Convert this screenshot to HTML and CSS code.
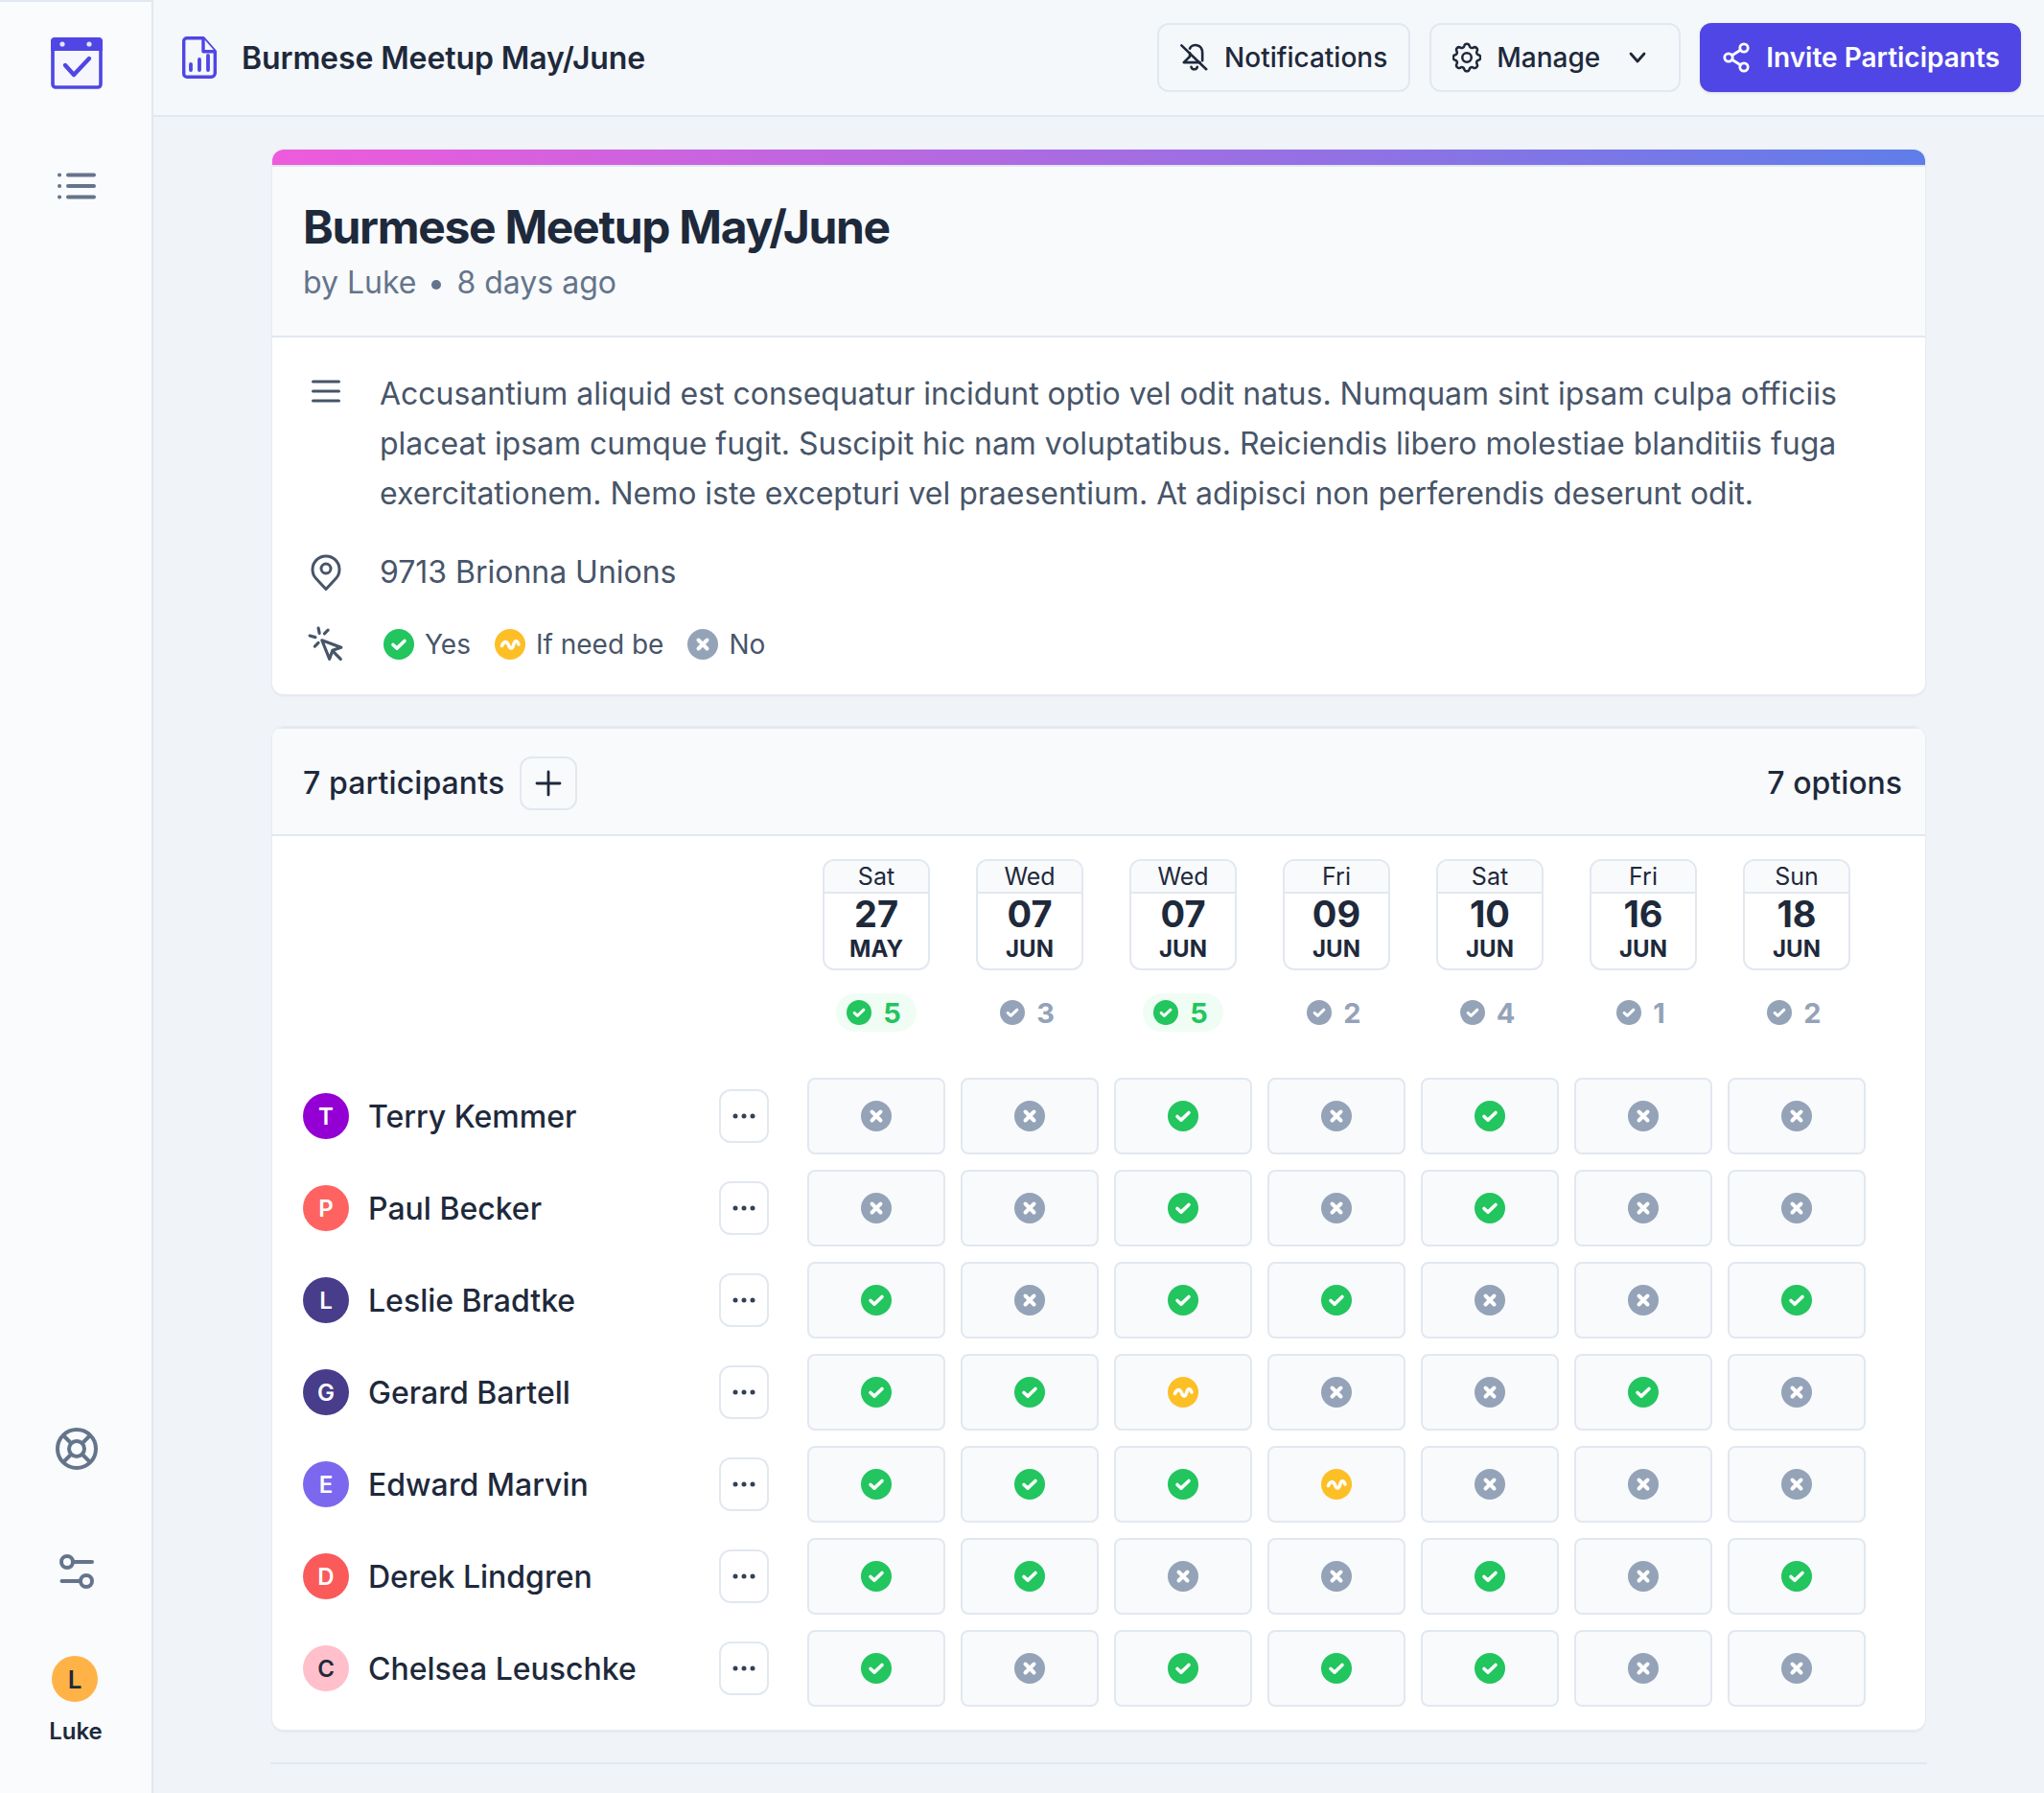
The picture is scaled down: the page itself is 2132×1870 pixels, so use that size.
FILE: index.html
```html
<!DOCTYPE html>
<html lang="en">
<head>
    <meta charset="UTF-8">
    <title>Burmese Meetup May/June</title>
    <link rel="stylesheet" href="styles.css">
</head>
<body>
    <!-- Shared icons -->
    <svg class="icon-defs" aria-hidden="true">
        <symbol id="yes" viewBox="0 0 32 32">
            <circle cx="16" cy="16" r="16" fill="#22c55e"/>
            <path d="M10 16.500l4 3.600 8-7.600" fill="none" stroke="#fff" stroke-width="3.600" stroke-linecap="round" stroke-linejoin="round"/>
        </symbol>
        <symbol id="maybe" viewBox="0 0 32 32">
            <circle cx="16" cy="16" r="16" fill="#fdbf26"/>
            <path d="M7.500 17.500C8.500 14.500 11 12.500 13 14.500C15 16.500 15 20.500 17.500 20C20 19.500 19.500 12.500 22 12.700C23.500 12.800 24.500 14.500 25 16" fill="none" stroke="#fff" stroke-width="3.600" stroke-linecap="round"/>
        </symbol>
        <symbol id="no" viewBox="0 0 32 32">
            <circle cx="16" cy="16" r="16" fill="#94a3b8"/>
            <path d="M11.500 11.500l9 9M20.500 11.500l-9 9" fill="none" stroke="#fff" stroke-width="4" stroke-linecap="round"/>
        </symbol>
        <symbol id="tally" viewBox="0 0 32 32">
            <circle cx="16" cy="16" r="16" fill="#94a3b8"/>
            <path d="M10 16.500l4 3.600 8-7.600" fill="none" stroke="#fff" stroke-width="3.600" stroke-linecap="round" stroke-linejoin="round"/>
        </symbol>
        <symbol id="dots" viewBox="0 0 24 8">
            <circle cx="3" cy="4" r="2.500"/>
            <circle cx="12" cy="4" r="2.500"/>
            <circle cx="21" cy="4" r="2.500"/>
        </symbol>
    </svg>

    <aside class="sidebar">
        <svg class="logo" viewBox="0 0 54 54">
            <rect x="2" y="2" width="50" height="50" rx="3" fill="#f6f7fe" stroke="#4f46e5" stroke-width="3.600"/>
            <path d="M0 4a4 4 0 0 1 4-4h46a4 4 0 0 1 4 4v10H0z" fill="#4f46e5"/>
            <circle cx="12" cy="7" r="2.600" fill="#e4e5fb"/>
            <circle cx="40" cy="7" r="2.600" fill="#e4e5fb"/>
            <path d="M15 29l9 10 16-17" fill="none" stroke="#4f46e5" stroke-width="4.400" stroke-linecap="round" stroke-linejoin="round"/>
        </svg>
        <svg class="side-list" viewBox="0 0 40 28" fill="none" stroke="#64748b" stroke-width="4" stroke-linecap="round">
            <path d="M11 2.500h27M11 14h27M11 25.500h27"/>
            <path d="M2 2.500h.1M2 14h.1M2 25.500h.1"/>
        </svg>
        <div class="side-bottom">
            <svg class="side-help" viewBox="0 0 44 44" fill="none" stroke="#64748b" stroke-width="4">
                <circle cx="22" cy="22" r="20"/>
                <circle cx="22" cy="22" r="8"/>
                <path d="M8 8l8.500 8.500M36 8l-8.500 8.500M8 36l8.500-8.500M36 36l-8.500-8.500"/>
            </svg>
            <svg class="side-prefs" viewBox="0 0 36 36" fill="none" stroke="#64748b" stroke-width="4" stroke-linecap="round">
                <circle cx="8" cy="8" r="6"/>
                <circle cx="28" cy="28" r="6"/>
                <path d="M14 8h20M2.500 28h19.500"/>
            </svg>
            <div class="side-avatar">L</div>
            <div class="side-name">Luke</div>
        </div>
    </aside>

    <div class="main">
        <header class="topbar">
            <svg class="doc-icon" viewBox="0 0 36 44" fill="none" stroke="#4f46e5" stroke-width="3.400">
                <path d="M5 1.700h17l12.300 14V38.300a4 4 0 0 1-4 4H5a3.300 3.300 0 0 1-3.300-3.300V5A3.300 3.300 0 0 1 5 1.700z" stroke-linejoin="round"/>
                <path d="M22 1.700V15.700h12.300" fill="#f5f8fb" stroke-linejoin="round"/>
                <path d="M9 35v-6M18 35V24M27 35V20" stroke-linecap="round" stroke-width="3.800"/>
            </svg>
            <div class="topbar-title">Burmese Meetup May/June</div>
            <div class="topbar-actions">
                <button class="btn">
                    <svg class="btn-icon" viewBox="0 0 32 32" fill="none" stroke="#1e293b" stroke-width="2.800" stroke-linecap="round" stroke-linejoin="round">
                        <path d="M1.500 2.500L29 29"/>
                        <path d="M10.700 6C13 .5 24.700 0 24.700 11v8.500M10.700 11v4L4 21.500h18"/>
                        <path d="M12.300 26.500c1 3.500 5.700 3.500 6.700 0"/>
                    </svg>
                    Notifications
                </button>
                <button class="btn btn-manage">
                    <svg class="btn-icon" viewBox="2.500 2.500 19 19" fill="none" stroke="#1e293b" stroke-width="1.600" stroke-linecap="round" stroke-linejoin="round">
                        <path d="M10.300 4.300c.4-1.800 3-1.800 3.400 0a1.700 1.700 0 0 0 2.600 1.100c1.500-.9 3.300.8 2.400 2.400a1.700 1.700 0 0 0 1 2.500c1.800.4 1.800 3 0 3.400a1.700 1.700 0 0 0-1 2.600c.9 1.500-.9 3.300-2.400 2.400a1.700 1.700 0 0 0-2.600 1c-.4 1.800-3 1.800-3.400 0a1.700 1.700 0 0 0-2.600-1c-1.500.9-3.300-.9-2.400-2.400a1.700 1.700 0 0 0-1-2.600c-1.800-.4-1.800-3 0-3.400a1.700 1.700 0 0 0 1-2.500c-.9-1.600.9-3.300 2.400-2.400 1 .6 2.300.1 2.600-1.100z"/>
                        <circle cx="12" cy="12" r="3"/>
                    </svg>
                    Manage
                    <svg class="btn-chevron" viewBox="0 0 20 14" fill="none" stroke="#1e293b" stroke-width="2.800" stroke-linecap="round" stroke-linejoin="round">
                        <path d="M3 3l7 8 7-8"/>
                    </svg>
                </button>
                <button class="btn btn-primary">
                    <svg class="btn-icon" viewBox="0 0 28 32" fill="none" stroke="#fff" stroke-width="2.800" stroke-linecap="round">
                        <circle cx="6" cy="16" r="4.200"/>
                        <circle cx="22" cy="6" r="4.200"/>
                        <circle cx="22" cy="26" r="4.200"/>
                        <path d="M9.600 13.800l8.800-5.600M9.600 18.200l8.800 5.600"/>
                    </svg>
                    Invite Participants
                </button>
            </div>
        </header>

        <div class="content">
            <section class="card">
                <div class="card-strip"></div>
                <div class="event-head">
                    <h1 class="event-title">Burmese Meetup May/June</h1>
                    <div class="event-meta">
                        <span>by Luke</span><span class="meta-dot"></span><span>8 days ago</span>
                    </div>
                </div>
                <div class="event-body">
                    <div class="event-row">
                        <svg class="event-icon icon-top" viewBox="0 0 30 24" fill="none" stroke="#475569" stroke-width="3" stroke-linecap="round">
                            <path d="M1.500 2h27M1.500 12h27M1.500 22h27"/>
                        </svg>
                        <p class="event-text">Accusantium aliquid est consequatur incidunt optio vel odit natus. Numquam sint ipsam culpa officiis placeat ipsam cumque fugit. Suscipit hic nam voluptatibus. Reiciendis libero molestiae blanditiis fuga exercitationem. Nemo iste excepturi vel praesentium. At adipisci non perferendis deserunt odit.</p>
                    </div>
                    <div class="event-row event-row-place">
                        <svg class="event-icon" viewBox="0 0 30 38" fill="none" stroke="#475569" stroke-width="3" stroke-linejoin="round">
                            <path d="M15 36.500L4.800 25.500a14 14 0 1 1 20.400 0z"/>
                            <circle cx="15" cy="15" r="5"/>
                        </svg>
                        <div class="event-text">9713 Brionna Unions</div>
                    </div>
                    <div class="event-row event-row-legend">
                        <svg class="event-icon" viewBox="0 0 36 36" fill="none" stroke="#475569" stroke-width="3" stroke-linecap="round" stroke-linejoin="round">
                            <path d="M14 14l7.500 18.500 3-8.500 8.500-3z"/>
                            <path d="M25 25l7.500 7.500"/>
                            <path d="M10.500 2l1 5M2 9.500l5.500 1.500M20 4l-3.500 3.500M7 20l3.500-3.500"/>
                        </svg>
                        <div class="legend">
                            <span class="legend-item"><svg class="vote"><use href="#yes"/></svg>Yes</span>
                            <span class="legend-item"><svg class="vote"><use href="#maybe"/></svg>If need be</span>
                            <span class="legend-item"><svg class="vote"><use href="#no"/></svg>No</span>
                        </div>
                    </div>
                </div>
            </section>

            <section class="card poll">
                <div class="poll-head">
                    <span class="poll-count">7 participants</span>
                    <button class="add-btn">
                        <svg viewBox="0 0 28 28" fill="none" stroke="#1e293b" stroke-width="2.800" stroke-linecap="round">
                            <path d="M14 2v24M2 14h24"/>
                        </svg>
                    </button>
                    <span class="poll-options">7 options</span>
                </div>
                <div class="poll-grid">
                    <div class="poll-corner"></div>

                    <div class="option">
                        <div class="date"><div class="date-day">Sat</div><div class="date-num">27</div><div class="date-month">MAY</div></div>
                        <div class="count count-top"><svg><use href="#yes"/></svg>5</div>
                    </div>
                    <div class="option">
                        <div class="date"><div class="date-day">Wed</div><div class="date-num">07</div><div class="date-month">JUN</div></div>
                        <div class="count"><svg><use href="#tally"/></svg>3</div>
                    </div>
                    <div class="option">
                        <div class="date"><div class="date-day">Wed</div><div class="date-num">07</div><div class="date-month">JUN</div></div>
                        <div class="count count-top"><svg><use href="#yes"/></svg>5</div>
                    </div>
                    <div class="option">
                        <div class="date"><div class="date-day">Fri</div><div class="date-num">09</div><div class="date-month">JUN</div></div>
                        <div class="count"><svg><use href="#tally"/></svg>2</div>
                    </div>
                    <div class="option">
                        <div class="date"><div class="date-day">Sat</div><div class="date-num">10</div><div class="date-month">JUN</div></div>
                        <div class="count"><svg><use href="#tally"/></svg>4</div>
                    </div>
                    <div class="option">
                        <div class="date"><div class="date-day">Fri</div><div class="date-num">16</div><div class="date-month">JUN</div></div>
                        <div class="count"><svg><use href="#tally"/></svg>1</div>
                    </div>
                    <div class="option">
                        <div class="date"><div class="date-day">Sun</div><div class="date-num">18</div><div class="date-month">JUN</div></div>
                        <div class="count"><svg><use href="#tally"/></svg>2</div>
                    </div>

                    <!-- Terry -->
                    <div class="person"><div class="avatar av-purple">T</div><div class="person-name">Terry Kemmer</div><button class="more-btn"><svg><use href="#dots"/></svg></button></div>
                    <div class="cell"><svg class="vote"><use href="#no"/></svg></div>
                    <div class="cell"><svg class="vote"><use href="#no"/></svg></div>
                    <div class="cell"><svg class="vote"><use href="#yes"/></svg></div>
                    <div class="cell"><svg class="vote"><use href="#no"/></svg></div>
                    <div class="cell"><svg class="vote"><use href="#yes"/></svg></div>
                    <div class="cell"><svg class="vote"><use href="#no"/></svg></div>
                    <div class="cell"><svg class="vote"><use href="#no"/></svg></div>

                    <!-- Paul -->
                    <div class="person"><div class="avatar av-coral">P</div><div class="person-name">Paul Becker</div><button class="more-btn"><svg><use href="#dots"/></svg></button></div>
                    <div class="cell"><svg class="vote"><use href="#no"/></svg></div>
                    <div class="cell"><svg class="vote"><use href="#no"/></svg></div>
                    <div class="cell"><svg class="vote"><use href="#yes"/></svg></div>
                    <div class="cell"><svg class="vote"><use href="#no"/></svg></div>
                    <div class="cell"><svg class="vote"><use href="#yes"/></svg></div>
                    <div class="cell"><svg class="vote"><use href="#no"/></svg></div>
                    <div class="cell"><svg class="vote"><use href="#no"/></svg></div>

                    <!-- Leslie -->
                    <div class="person"><div class="avatar av-indigo">L</div><div class="person-name">Leslie Bradtke</div><button class="more-btn"><svg><use href="#dots"/></svg></button></div>
                    <div class="cell"><svg class="vote"><use href="#yes"/></svg></div>
                    <div class="cell"><svg class="vote"><use href="#no"/></svg></div>
                    <div class="cell"><svg class="vote"><use href="#yes"/></svg></div>
                    <div class="cell"><svg class="vote"><use href="#yes"/></svg></div>
                    <div class="cell"><svg class="vote"><use href="#no"/></svg></div>
                    <div class="cell"><svg class="vote"><use href="#no"/></svg></div>
                    <div class="cell"><svg class="vote"><use href="#yes"/></svg></div>

                    <!-- Gerard -->
                    <div class="person"><div class="avatar av-indigo">G</div><div class="person-name">Gerard Bartell</div><button class="more-btn"><svg><use href="#dots"/></svg></button></div>
                    <div class="cell"><svg class="vote"><use href="#yes"/></svg></div>
                    <div class="cell"><svg class="vote"><use href="#yes"/></svg></div>
                    <div class="cell"><svg class="vote"><use href="#maybe"/></svg></div>
                    <div class="cell"><svg class="vote"><use href="#no"/></svg></div>
                    <div class="cell"><svg class="vote"><use href="#no"/></svg></div>
                    <div class="cell"><svg class="vote"><use href="#yes"/></svg></div>
                    <div class="cell"><svg class="vote"><use href="#no"/></svg></div>

                    <!-- Edward -->
                    <div class="person"><div class="avatar av-violet">E</div><div class="person-name">Edward Marvin</div><button class="more-btn"><svg><use href="#dots"/></svg></button></div>
                    <div class="cell"><svg class="vote"><use href="#yes"/></svg></div>
                    <div class="cell"><svg class="vote"><use href="#yes"/></svg></div>
                    <div class="cell"><svg class="vote"><use href="#yes"/></svg></div>
                    <div class="cell"><svg class="vote"><use href="#maybe"/></svg></div>
                    <div class="cell"><svg class="vote"><use href="#no"/></svg></div>
                    <div class="cell"><svg class="vote"><use href="#no"/></svg></div>
                    <div class="cell"><svg class="vote"><use href="#no"/></svg></div>

                    <!-- Derek -->
                    <div class="person"><div class="avatar av-red">D</div><div class="person-name">Derek Lindgren</div><button class="more-btn"><svg><use href="#dots"/></svg></button></div>
                    <div class="cell"><svg class="vote"><use href="#yes"/></svg></div>
                    <div class="cell"><svg class="vote"><use href="#yes"/></svg></div>
                    <div class="cell"><svg class="vote"><use href="#no"/></svg></div>
                    <div class="cell"><svg class="vote"><use href="#no"/></svg></div>
                    <div class="cell"><svg class="vote"><use href="#yes"/></svg></div>
                    <div class="cell"><svg class="vote"><use href="#no"/></svg></div>
                    <div class="cell"><svg class="vote"><use href="#yes"/></svg></div>

                    <!-- Chelsea -->
                    <div class="person"><div class="avatar av-pink">C</div><div class="person-name">Chelsea Leuschke</div><button class="more-btn"><svg><use href="#dots"/></svg></button></div>
                    <div class="cell"><svg class="vote"><use href="#yes"/></svg></div>
                    <div class="cell"><svg class="vote"><use href="#no"/></svg></div>
                    <div class="cell"><svg class="vote"><use href="#yes"/></svg></div>
                    <div class="cell"><svg class="vote"><use href="#yes"/></svg></div>
                    <div class="cell"><svg class="vote"><use href="#yes"/></svg></div>
                    <div class="cell"><svg class="vote"><use href="#no"/></svg></div>
                    <div class="cell"><svg class="vote"><use href="#no"/></svg></div>
                </div>
            </section>

            <div class="bottom-rule"></div>
        </div>
    </div>
</body>
</html>
```

FILE: styles.css
```css
* {
    box-sizing: border-box;
}

html, body {
    height: 1870px;
    overflow: hidden;
}

body {
    margin: 0;
    display: flex;
    font-family: Inter, "Liberation Sans", sans-serif;
    color: #1e293b;
    background-color: #f0f3f8;
}

button {
    font-family: inherit;
    cursor: pointer;
}

.icon-defs {
    position: absolute;
    width: 0;
    height: 0;
}

/* Sidebar */
.sidebar {
    width: 160px;
    flex-shrink: 0;
    display: flex;
    flex-direction: column;
    align-items: center;
    background-color: #f9fbfd;
    border-top: 2px solid #e2e8f0;
    border-right: 2px solid #e2e8f0;
    padding-top: 37px;
    padding-left: 2px;
}

.logo {
    width: 54px;
    height: 54px;
    margin-left: -1px;
}

.side-list {
    width: 40px;
    height: 28px;
    margin-top: 87px;
}

.side-bottom {
    margin-top: auto;
    display: flex;
    flex-direction: column;
    align-items: center;
    padding-bottom: 49px;
}

.side-help {
    width: 44px;
    height: 44px;
}

.side-prefs {
    width: 36px;
    height: 36px;
    margin-top: 88px;
}

.side-avatar {
    width: 48px;
    height: 48px;
    margin-top: 70px;
    margin-left: -4px;
    border-radius: 50%;
    background-color: #ffb347;
    display: flex;
    align-items: center;
    justify-content: center;
    font-size: 26px;
    font-weight: 600;
}

.side-name {
    margin-top: 16px;
    margin-left: -2px;
    font-size: 24px;
    line-height: 30px;
    font-weight: 600;
}

/* Top bar */
.main {
    flex: 1;
    min-width: 0;
}

.topbar {
    height: 122px;
    display: flex;
    align-items: center;
    padding: 0 24px 0 30px;
    background-color: #f5f8fb;
    border-bottom: 2px solid #e2e8f0;
}

.doc-icon {
    width: 36px;
    height: 44px;
}

.topbar-title {
    margin-left: 26px;
    font-size: 32px;
    font-weight: 600;
    letter-spacing: -0.1px;
}

.topbar-actions {
    margin-left: auto;
    display: flex;
    gap: 20px;
}

.btn {
    height: 72px;
    display: flex;
    align-items: center;
    gap: 16px;
    padding: 0 22px;
    font-size: 28px;
    font-weight: 500;
    color: #1e293b;
    background-color: #f5f8fb;
    border: 2px solid #e2e8f0;
    border-radius: 12px;
}

.btn-icon {
    width: 30px;
    height: 32px;
}

.btn-chevron {
    width: 20px;
    height: 14px;
    margin-left: 13px;
    margin-right: 11px;
}

.btn-primary {
    padding: 0 20px 0 21px;
    font-weight: 600;
    color: #ffffff;
    background-color: #4f46e5;
    border-color: #4f46e5;
    box-shadow: 0 1px 3px rgba(15, 23, 42, 0.12);
}

/* Cards */
.content {
    width: 1728px;
    margin-left: 122px;
    padding-top: 34px;
}

.card {
    width: 1724px;
    margin-left: 2px;
    background-color: #ffffff;
    border-radius: 12px;
    overflow: hidden;
    box-shadow: 0 0 0 1px #e7ecf3, 0 2px 3px rgba(15, 23, 42, 0.07);
}

.card-strip {
    height: 16px;
    background: linear-gradient(to right, #ee5bdc, #5f7de9);
}

.event-head {
    height: 180px;
    padding: 35px 32px 0;
    background-color: #f8fafc;
    border-top: 2px solid #e2e8f0;
    border-bottom: 2px solid #e2e8f0;
}

.event-title {
    margin: 0;
    font-size: 48px;
    line-height: 56px;
    font-weight: 700;
    letter-spacing: -1.3px;
}

.event-meta {
    margin-top: 7px;
    display: flex;
    align-items: center;
    gap: 16px;
    font-size: 32px;
    line-height: 46px;
    color: #64748b;
}

.meta-dot {
    width: 10px;
    height: 10px;
    border-radius: 50%;
    background-color: #64748b;
    margin-top: 4px;
}

.event-body {
    padding: 33px 32px 0;
    height: 372px;
}

.event-row {
    display: flex;
    align-items: center;
    gap: 32px;
}

.event-row-place {
    margin-top: 30px;
}

.event-row-legend {
    margin-top: 30px;
}

.event-icon {
    width: 48px;
    height: 38px;
    flex-shrink: 0;
}

.icon-top {
    align-self: flex-start;
    height: 24px;
    margin-top: 11px;
}

.event-text {
    margin: 0;
    font-size: 32px;
    line-height: 52px;
    letter-spacing: -0.015px;
    color: #475569;
}

.legend {
    display: flex;
    align-items: center;
    gap: 25px;
    margin-left: 4px;
}

.legend-item {
    display: flex;
    align-items: center;
    gap: 11px;
    font-size: 28px;
    color: #475569;
}

.vote {
    width: 32px;
    height: 32px;
    display: block;
}

/* Poll */
.poll {
    margin-top: 34px;
    height: 1046px;
}

.poll-head {
    height: 114px;
    display: flex;
    align-items: center;
    padding: 3px 24px 0 32px;
    font-size: 32px;
    font-weight: 500;
    background-color: #f8fafc;
    border-top: 2px solid #e2e8f0;
    border-bottom: 2px solid #e2e8f0;
}

.poll-count {
    letter-spacing: 0.1px;
}

.add-btn {
    width: 60px;
    height: 56px;
    margin-left: 16px;
    display: flex;
    align-items: center;
    justify-content: center;
    padding: 0;
    background-color: transparent;
    border: 2px solid #e2e8f0;
    border-radius: 12px;
}

.add-btn svg {
    width: 28px;
    height: 28px;
}

.poll-options {
    margin-left: auto;
}

.poll-grid {
    display: grid;
    grid-template-columns: 510px repeat(7, 144px);
    gap: 16px;
    padding: 24px 32px;
}

.option {
    display: flex;
    flex-direction: column;
    align-items: center;
    padding-bottom: 32px;
}

.date {
    width: 112px;
    height: 116px;
    border: 2px solid #e2e8f0;
    border-radius: 12px;
    overflow: hidden;
    text-align: center;
}

.date-day {
    height: 34px;
    font-size: 25px;
    line-height: 32px;
    background-color: #f8fafc;
    border-bottom: 2px solid #e2e8f0;
}

.date-num {
    font-size: 38px;
    line-height: 42px;
    font-weight: 700;
}

.date-month {
    margin-top: 2px;
    font-size: 24px;
    line-height: 28px;
    font-weight: 700;
}

.count {
    height: 40px;
    margin-top: 24px;
    padding: 0 16px 0 11px;
    display: flex;
    align-items: center;
    gap: 12px;
    font-size: 29px;
    font-weight: 700;
    color: #94a3b8;
    border-radius: 20px;
}

.count svg {
    width: 26px;
    height: 26px;
}

.count-top {
    color: #22c55e;
    background-color: #f0fdf4;
}

.person {
    display: flex;
    align-items: center;
    padding-right: 24px;
}

.avatar {
    width: 48px;
    height: 48px;
    flex-shrink: 0;
    border-radius: 50%;
    display: flex;
    align-items: center;
    justify-content: center;
    font-size: 24px;
    font-weight: 600;
    color: #ffffff;
}

.av-purple { background-color: #9400d3; }
.av-coral { background-color: #ff6361; }
.av-indigo { background-color: #483d8b; }
.av-violet { background-color: #7b68ee; }
.av-red { background-color: #fa5a5a; }
.av-pink { background-color: #ffc0cb; color: #1e293b; }

.person-name {
    margin-left: 20px;
    font-size: 32px;
    font-weight: 500;
}

.more-btn {
    width: 52px;
    height: 56px;
    margin-left: auto;
    display: flex;
    align-items: center;
    justify-content: center;
    padding: 0;
    background-color: #ffffff;
    border: 2px solid #e2e8f0;
    border-radius: 12px;
}

.more-btn svg {
    width: 24px;
    height: 8px;
    fill: #334155;
}

.cell {
    height: 80px;
    display: flex;
    align-items: center;
    justify-content: center;
    background-color: #f8fafc;
    border: 2px solid #e2e8f0;
    border-radius: 8px;
}

.bottom-rule {
    height: 2px;
    margin-top: 34px;
    background-color: #e2e8f0;
}
```
